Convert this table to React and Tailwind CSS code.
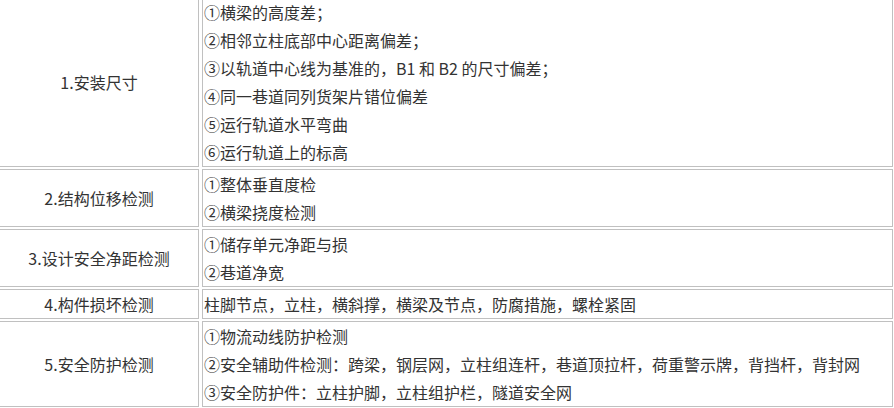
const rows = [
  {
    title: "1.安装尺寸",
    items: [
      "①横梁的高度差；",
      "②相邻立柱底部中心距离偏差；",
      "③以轨道中心线为基准的，B1 和 B2 的尺寸偏差；",
      "④同一巷道同列货架片错位偏差",
      "⑤运行轨道水平弯曲",
      "⑥运行轨道上的标高",
    ],
  },
  { title: "2.结构位移检测", items: ["①整体垂直度检", "②横梁挠度检测"] },
  { title: "3.设计安全净距检测", items: ["①储存单元净距与损", "②巷道净宽"] },
  {
    title: "4.构件损坏检测",
    items: ["柱脚节点，立柱，横斜撑，横梁及节点，防腐措施，螺栓紧固"],
  },
  {
    title: "5.安全防护检测",
    items: [
      "①物流动线防护检测",
      "②安全辅助件检测：跨梁，钢层网，立柱组连杆，巷道顶拉杆，荷重警示牌，背挡杆，背封网",
      "③安全防护件：立柱护脚，立柱组护栏，隧道安全网",
    ],
  },
];

export default function App() {
  return (
    <div className="w-[894px] h-[408px] overflow-hidden bg-white">
      <div
        className="ml-[-1px] mt-[-3px] grid grid-cols-[200px_691px] gap-x-[3px] gap-y-[2px] text-[16px] leading-[28px] text-[#333]"
        style={{ fontFamily: '"Noto Sans CJK SC", "Noto Sans", sans-serif' }}
      >
        {rows.map((row) => (
          <div key={row.title} className="contents">
            <div className="border border-[#c0c0c0] flex items-center justify-center">
              {row.title}
            </div>
            <div className="border border-[#c0c0c0] pl-px flex flex-col">
              {row.items.map((item) => (
                <div key={item} className="whitespace-nowrap">
                  {item}
                </div>
              ))}
            </div>
          </div>
        ))}
      </div>
    </div>
  );
}
